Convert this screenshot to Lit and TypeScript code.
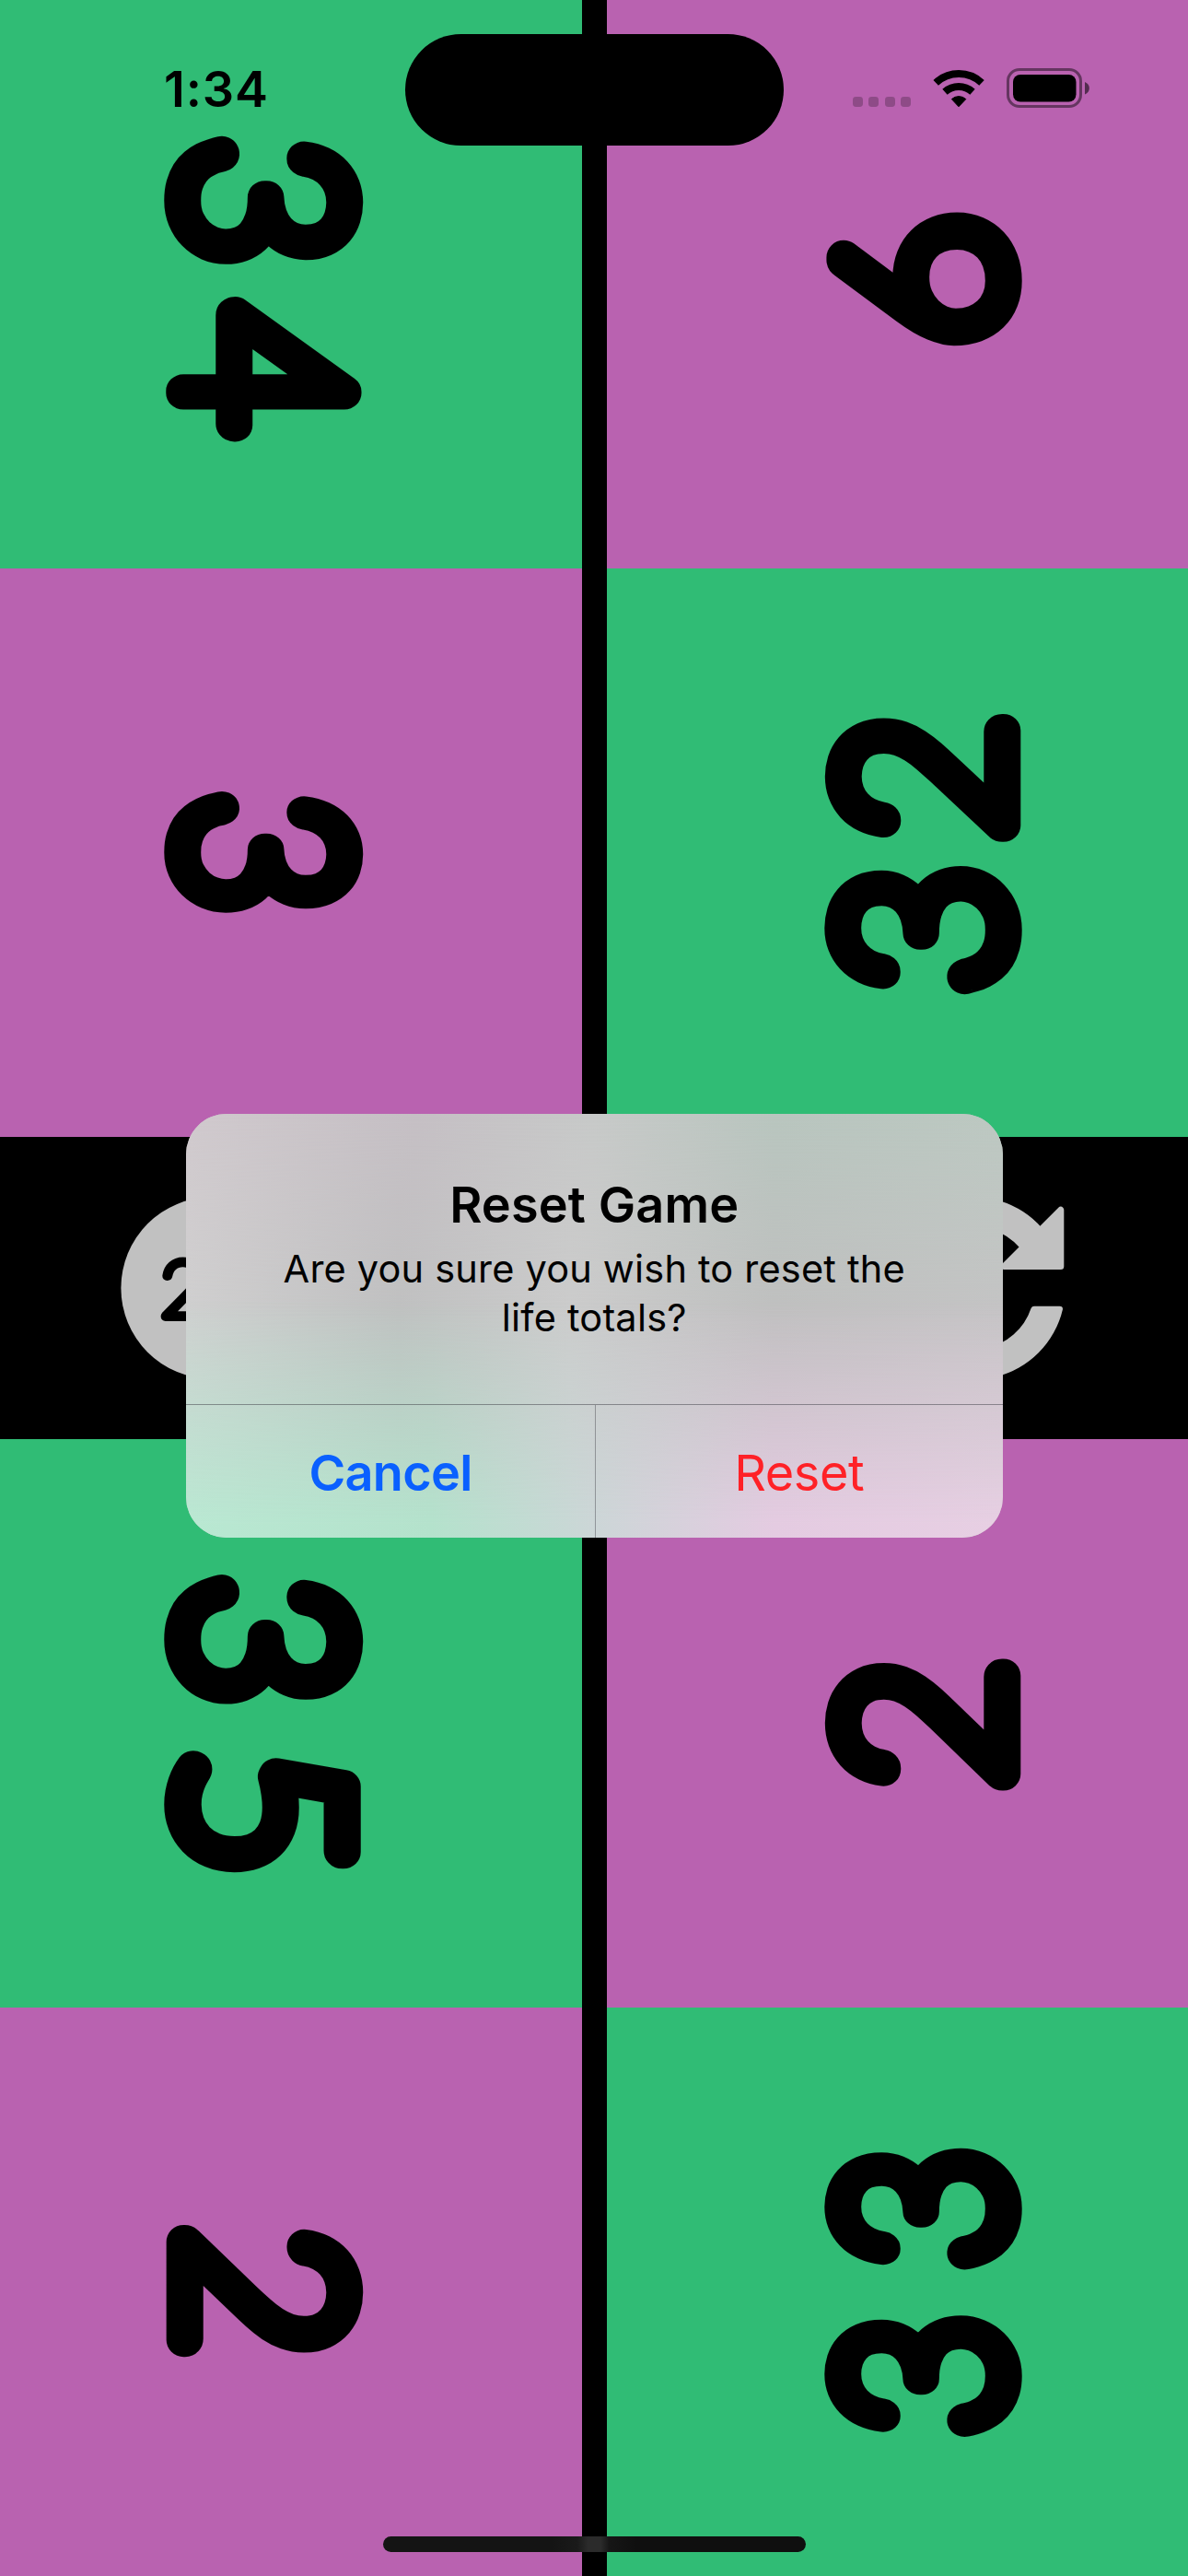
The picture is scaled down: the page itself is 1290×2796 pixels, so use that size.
import { LitElement, html, svg, css } from "lit";
import { customElement, property } from "lit/decorators.js";

type Facing = "left" | "right";

interface Cell {
  value: string;
  tone: "green" | "purple";
  facing: Facing;
  /** centres of the digits along the reading direction, relative to the cell centre */
  at: number[];
  squeeze: number;
}

const UPPER: Cell[] = [
  { value: "34", tone: "green", facing: "left", at: [-90, 93], squeeze: 0.95 },
  { value: "6", tone: "purple", facing: "right", at: [4], squeeze: 1 },
  { value: "3", tone: "purple", facing: "left", at: [0.5], squeeze: 0.9 },
  { value: "32", tone: "green", facing: "right", at: [-83, 82], squeeze: 0.95 },
];

const LOWER: Cell[] = [
  { value: "35", tone: "green", facing: "left", at: [-90, 96.5], squeeze: 0.96 },
  { value: "2", tone: "purple", facing: "right", at: [-0.5], squeeze: 0.98 },
  { value: "2", tone: "purple", facing: "left", at: [0], squeeze: 0.98 },
  { value: "33", tone: "green", facing: "right", at: [-90.5, 91], squeeze: 0.9 },
];

@customElement("life-total")
export class LifeTotal extends LitElement {
  @property({ attribute: false }) cell!: Cell;

  static styles = css`
    :host { display: block; min-width: 0; min-height: 0; }
    .pad { display: block; width: 100%; height: 100%; }
    .green { background: #30bc75; }
    .purple { background: #b962b0; }
    .digits {
      font-family: Lato, sans-serif;
      font-weight: 100;
      font-size: 248px;
      text-anchor: middle;
      stroke: #000;
      stroke-width: 37.5px;
      stroke-linejoin: round;
      stroke-linecap: round;
    }
  `;

  render() {
    const { value, tone, facing, at, squeeze } = this.cell;
    const turn = facing === "left" ? "translate(198.5 308.5) rotate(90)" : "translate(430.5 308.5) rotate(-90)";
    return html`<svg class="pad ${tone}" viewBox="0 0 632 617" preserveAspectRatio="none">
      <text class="digits" transform="${turn} scale(${squeeze} 1)" x=${at.map((u) => (u / squeeze).toFixed(1)).join(" ")} y="0">${value}</text>
    </svg>`;
  }
}

@customElement("status-bar")
export class StatusBar extends LitElement {
  static styles = css`
    :host { display: block; font-family: Inter, sans-serif; }
    .bar { display: grid; grid-template-columns: 440px 411px 439px; padding-top: 37px; align-items: start; }
    .time { padding: 28px 0 0 178px; font-size: 54px; line-height: 64px; font-weight: 600; letter-spacing: 0.9px; color: #000; }
    .island { height: 121px; border-radius: 61px; background: #000; }
    .signals { display: block; width: 439px; height: 121px; }
  `;

  render() {
    return html`<div class="bar">
      <div class="time">1:34</div>
      <div class="island"></div>
      <svg class="signals" viewBox="851 37 439 121">
        ${[926, 943, 961, 978].map((x) => svg`<rect x=${x} y="105" width="11" height="11" rx="3.4" fill="#000" fill-opacity="0.23" />`)}
        <g fill="none" stroke="#000" stroke-width="8">
          <path d="M1016.2 89.8 A36.5 36.5 0 0 1 1066 89.8" />
          <path d="M1026 99.8 A22.5 22.5 0 0 1 1056 99.8" />
        </g>
        <path d="M1041 115.8 L1033.4 107.6 A11.4 11.4 0 0 1 1048.8 107.6 Z" fill="#000" stroke="#000" stroke-width="1" stroke-linejoin="round" />
        <rect x="1094.5" y="75.5" width="79" height="40" rx="12.5" fill="none" stroke="#000" stroke-opacity="0.45" stroke-width="3" />
        <rect x="1100" y="81" width="68.5" height="29.5" rx="8" fill="#000" />
        <path d="M1178 89 C1184.5 91.5 1184.5 100 1178 102.5 Z" fill="#000" fill-opacity="0.55" />
      </svg>
    </div>`;
  }
}

@customElement("reset-alert")
export class ResetAlert extends LitElement {
  static styles = css`
    :host { display: block; font-family: Inter, sans-serif; color: #000; }
    .sheet {
      position: relative;
      display: flex;
      flex-direction: column;
      width: 886.5px;
      height: 460px;
      border-radius: 44px;
      overflow: hidden;
      background: linear-gradient(90deg, #d0d0d0 0%, #c0c1c1 26%, #cccccc 47%, #c0c0c0 72%, #c5c4c5 100%);
    }
    .sheet::before, .sheet::after { content: ""; position: absolute; inset: 0; }
    .sheet::before {
      background: linear-gradient(90deg, #d0c9cd 0%, #c5bfc4 28%, #c7c9c8 50%, #b8c5be 72%, #bcc8c1 100%);
      -webkit-mask-image: linear-gradient(180deg, #000 0%, transparent 48%);
      mask-image: linear-gradient(180deg, #000 0%, transparent 48%);
    }
    .sheet::after {
      background: linear-gradient(90deg, #b9e8d2 0%, #b4e2cc 30%, #ccd6d7 50%, #e4cbe1 72%, #e7cfe3 100%);
      -webkit-mask-image: linear-gradient(180deg, transparent 44%, rgba(0, 0, 0, 0.5) 70%, #000 97%);
      mask-image: linear-gradient(180deg, transparent 44%, rgba(0, 0, 0, 0.5) 70%, #000 97%);
    }
    .copy, .actions { position: relative; z-index: 1; }
    .copy { height: 315px; box-sizing: border-box; padding-top: 67px; text-align: center; }
    .title { font-size: 54px; line-height: 64px; font-weight: 600; letter-spacing: 0.15px; }
    .message { margin-top: 11px; font-size: 41.5px; line-height: 53px; font-weight: 400; letter-spacing: 0.2px; }
    .actions { display: grid; grid-template-columns: 445px 1fr; flex: 1; border-top: 1px solid rgba(60, 60, 67, 0.5); }
    .action { display: flex; align-items: center; justify-content: center; padding-top: 3px; font-size: 54px; line-height: 64px; }
    .cancel { color: #0a60ff; font-weight: 600; border-right: 1px solid rgba(60, 60, 67, 0.42); letter-spacing: -0.7px; }
    .reset { color: #ff2127; letter-spacing: -0.4px; }
  `;

  render() {
    return html`<div class="sheet" role="alertdialog">
      <div class="copy">
        <div class="title">Reset Game</div>
        <div class="message">Are you sure you wish to reset the<br />life totals?</div>
      </div>
      <div class="actions">
        <div class="action cancel">Cancel</div>
        <div class="action reset">Reset</div>
      </div>
    </div>`;
  }
}

@customElement("app-root")
export class AppRoot extends LitElement {
  static styles = css`
    :host { display: block; }
    .screen {
      position: relative;
      display: grid;
      grid-template-rows: 1234px 328px 1234px;
      width: 1290px;
      height: 2796px;
      overflow: hidden;
      background: #000;
    }
    .players { display: grid; grid-template-columns: 632px 631px; grid-template-rows: 617px 617px; column-gap: 27px; }
    .tools { display: flex; align-items: center; justify-content: space-between; padding: 0 134px 0 131px; }
    .tool { display: block; width: 198px; height: 198px; overflow: visible; }
    .start { font-family: Lato, sans-serif; font-size: 84px; font-weight: 100; stroke: #000; stroke-width: 10px; stroke-linejoin: round; }
    .top, .alert, .home { position: absolute; }
    .top { inset: 0 0 auto 0; }
    .alert { left: 202px; top: 1209px; }
    .home {
      left: 416px;
      top: 2753px;
      width: 459px;
      height: 17px;
      border-radius: 9px;
      background: linear-gradient(90deg, #141414 0%, #141414 40%, #1a1a1a 46%, #2b2b2b 48.5%, #2b2b2b 51.5%, #161616 53.5%, #0f0f0f 60%, #0f0f0f 100%);
    }
  `;

  render() {
    const board = (cells: Cell[]) =>
      html`<div class="players">${cells.map((cell) => html`<life-total .cell=${cell}></life-total>`)}</div>`;
    return html`<div class="screen">
      ${board(UPPER)}
      <div class="tools">
        <svg class="tool" viewBox="0 0 198 198">
          <circle cx="99" cy="99" r="98.6" fill="#c1c1c1" />
          <text class="start" x="43" y="129.5">20</text>
        </svg>
        <svg class="tool" viewBox="0 0 198 198">
          <g fill="#c1c1c1">
            <path d="M2 79 A99 99 0 0 1 173.5 34 L182 60 H151 L149 55 A66 66 0 0 0 36 79 Z" />
            <path d="M196 122 Q196 118.7 192.7 118.7 H165 Q162.6 118.7 161.6 121 A66 66 0 0 1 49 143 L16 138 L24.5 164 A99 99 0 0 0 196 122 Z" />
          </g>
          <g fill="#c1c1c1" stroke="#c1c1c1" stroke-width="7" stroke-linejoin="round">
            <path d="M193.8 14.2 V75.5 H132.5 Z" />
            <path d="M4.2 183.8 V122.5 H65.5 Z" />
          </g>
        </svg>
      </div>
      ${board(LOWER)}
      <status-bar class="top"></status-bar>
      <reset-alert class="alert"></reset-alert>
      <div class="home"></div>
    </div>`;
  }
}
